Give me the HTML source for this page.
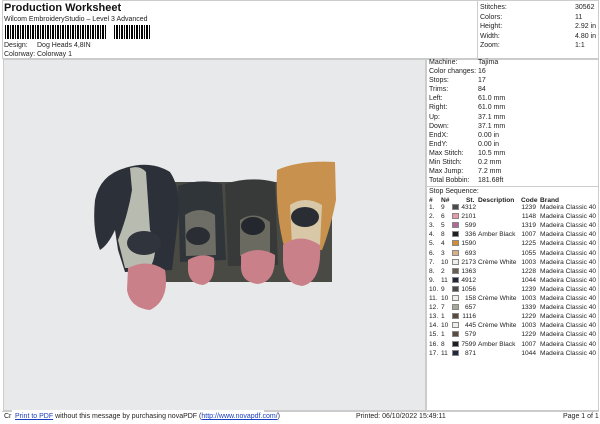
<!DOCTYPE html>
<html><head><style>
*{margin:0;padding:0;box-sizing:border-box}
body{width:600px;height:424px;background:#fff;font-family:"Liberation Sans",sans-serif;color:#222;position:relative;overflow:hidden;font-size:7px}
.a{position:absolute;white-space:nowrap}
.r{position:absolute;left:429px;width:170px;height:9px;font-size:6.6px;line-height:9px}
.r span{position:absolute;white-space:nowrap}
.sw{width:7px;height:6px;top:1px;border:1px solid #888}
</style></head><body>
<div class="a" style="left:2px;top:0;width:597px;height:59px;border:1px solid #ccc"></div>
<div class="a" style="left:477px;top:0;width:1px;height:59px;background:#ccc"></div>
<div class="a" style="left:4px;top:2px;font-size:11px;font-weight:bold;color:#111">Production Worksheet</div>
<div class="a" style="left:4px;top:16px;font-size:7px">Wilcom EmbroideryStudio – Level 3 Advanced</div>
<div class="a" style="left:5px;top:25px;width:102px;height:14px;background:repeating-linear-gradient(90deg,#000 0 1px,#fff 1px 2px,#000 2px 4px,#fff 4px 5px)"></div>
<div class="a" style="left:109px;top:25px;width:10px;height:14px;background:#fff"></div>
<div class="a" style="left:114px;top:25px;width:36px;height:14px;background:repeating-linear-gradient(90deg,#000 0 1px,#fff 1px 2px,#000 2px 4px,#fff 4px 5px)"></div>
<div class="a" style="left:4px;top:42px">Design:</div><div class="a" style="left:37px;top:42px">Dog Heads 4,8IN</div>
<div class="a" style="left:4px;top:51px">Colorway:</div><div class="a" style="left:37px;top:51px">Colorway 1</div>
<div class="a" style="left:480px;top:3px;line-height:9.6px">Stitches:<br>Colors:<br>Height:<br>Width:<br>Zoom:</div>
<div class="a" style="left:575px;top:3px;line-height:9.6px">30562<br>11<br>2.92 in<br>4.80 in<br>1:1</div>

<div class="a" style="left:3px;top:59px;width:423px;height:352px;background:#e8e9ea;border:1px solid #ccc"></div>
<div class="a" style="left:426px;top:59px;width:173px;height:352px;border:1px solid #ccc"></div>

<svg class="a" style="left:0;top:0" width="600" height="424">
<rect x="160" y="182" width="172" height="100" fill="#4a4a44"/>
<path d="M95 200 Q100 175 125 168 Q150 160 170 172 Q182 190 178 220 L172 270 L125 272 L118 250 L115 230 Q108 245 100 250 Q92 230 95 200Z" fill="#2c3038"/>
<path d="M130 168 Q140 165 146 172 L150 230 Q160 250 150 268 L125 268 L118 240 Q128 215 132 190Z" fill="#b8bcb0"/>
<ellipse cx="144" cy="243" rx="17" ry="12" fill="#30343c"/>
<path d="M128 268 Q148 258 165 270 Q170 300 150 310 Q130 308 127 290Z" fill="#c98088"/>
<path d="M178 186 Q200 178 222 184 L226 260 L180 262Z" fill="#30353a"/>
<path d="M185 215 Q200 205 215 215 L216 255 L186 256Z" fill="#6e6e66"/>
<ellipse cx="198" cy="236" rx="12" ry="9" fill="#2a2e34"/>
<path d="M188 260 Q202 252 214 258 Q216 282 203 285 Q189 284 188 270Z" fill="#c98088"/>
<path d="M225 184 Q250 176 275 182 L278 265 L228 266Z" fill="#383a3a"/>
<path d="M240 220 Q255 210 270 222 L270 255 L240 256Z" fill="#6a6a60"/>
<ellipse cx="253" cy="226" rx="12" ry="9" fill="#24282e"/>
<path d="M241 255 Q258 245 275 255 Q276 282 258 284 Q240 282 241 265Z" fill="#c98088"/>
<path d="M277 170 Q300 160 335 162 L336 200 Q330 230 322 250 L285 250 Q275 215 277 170Z" fill="#c8924e"/>
<path d="M290 205 Q305 195 322 205 L320 245 L292 245Z" fill="#d8c8a8"/>
<ellipse cx="305" cy="217" rx="14" ry="10" fill="#2a2e34"/>
<path d="M283 245 Q300 232 320 245 Q322 282 302 286 Q284 284 283 262Z" fill="#c98088"/>
</svg>

<div class="a" style="left:429px;top:58px;line-height:9.1px">Machine:<br>Color changes:<br>Stops:<br>Trims:<br>Left:<br>Right:<br>Up:<br>Down:<br>EndX:<br>EndY:<br>Max Stitch:<br>Min Stitch:<br>Max Jump:<br>Total Bobbin:</div>
<div class="a" style="left:478px;top:58px;line-height:9.1px">Tajima<br>16<br>17<br>84<br>61.0 mm<br>61.0 mm<br>37.1 mm<br>37.1 mm<br>0.00 in<br>0.00 in<br>10.5 mm<br>0.2 mm<br>7.2 mm<br>181.68ft</div>
<div class="a" style="left:427px;top:186px;width:171px;height:1px;background:#ccc"></div>
<div class="a" style="left:429px;top:188px">Stop Sequence:</div>
<div class="r" style="top:196px;font-weight:bold;text-decoration:underline"><span style="left:0">#</span><span style="left:12px">N#</span><span style="left:37px">St.</span><span style="left:49px">Description</span><span style="left:92px">Code</span><span style="left:111px">Brand</span></div>
<div id="t"></div>
<script>
var d=[["9","#4a4a4e","4312",""],["6","#e89aa8","2101",""],["5","#b06a98","599",""],["8","#1e1e22","336","Amber Black"],["4","#d48c30","1590",""],["3","#d8b088","693",""],["10","#eeeeea","2173","Crème White"],["2","#6a5e50","1363",""],["11","#22283a","4912",""],["9","#4a4a4e","1056",""],["10","#eeeeea","158","Crème White"],["7","#a8a898","657",""],["1","#5a4a40","1116",""],["10","#eeeeea","445","Crème White"],["1","#5a4a40","579",""],["8","#1e1e22","7599","Amber Black"],["11","#22283a","871",""]];
var c=["1239","1148","1319","1007","1225","1055","1003","1228","1044","1239","1003","1339","1229","1003","1229","1007","1044"];
var h="";d.forEach(function(x,i){h+='<div class="r" style="top:'+(203+i*9.1)+'px"><span style="left:0">'+(i+1)+'.</span><span style="left:12px">'+x[0]+'</span><span class="sw" style="left:23px;background:'+x[1]+'"></span><span style="right:123px">'+x[2]+'</span><span style="left:49px">'+x[3]+'</span><span style="right:63px">'+c[i]+'</span><span style="left:111px">Madeira Classic 40</span></div>';});
document.getElementById("t").innerHTML=h;
</script>
<div class="a" style="left:2px;top:411px;width:597px;height:1px;background:#ccc"></div>
<div class="a" style="left:4px;top:413px">Cr</div>
<div class="a" style="left:12px;top:410px;width:252px;height:14px;background:#fff"></div>
<div class="a" style="left:15px;top:413px"><span style="color:#1a3fbf;text-decoration:underline">Print to PDF</span> without this message by purchasing novaPDF (<span style="color:#1a3fbf;text-decoration:underline">http://www.novapdf.com/</span>)</div>
<div class="a" style="left:356px;top:413px">Printed: 06/10/2022 15:49:11</div>
<div class="a" style="left:563px;top:413px">Page 1 of 1</div>
</body></html>
